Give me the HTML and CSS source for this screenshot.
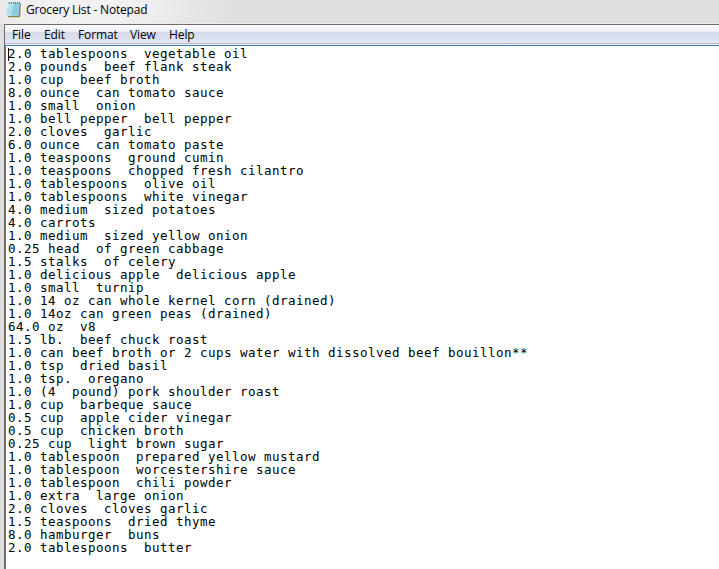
FILE: index.html
```html
<!DOCTYPE html>
<html lang="en">
<head>
<meta charset="utf-8">
<title>Grocery List - Notepad</title>
<link rel="stylesheet" href="styles.css">
</head>
<body>
<div class="window">
<header class="titlebar">
<svg class="icon" width="18" height="18" viewBox="0 0 18 18">
<path d="M4.5 2 16 2.5 15 16.3 3 16.3z" fill="#8f8058"/>
<path d="M3.5 1.5 15 1.5 13.5 15 1 15z" fill="#8fd0e2"/>
<path d="M3.5 1.5 9 1.5 6 15 1 15z" fill="#bfe6ef"/>
<path d="M4 6h9.5M3.5 8h9.5M3.3 10h9.5M3 12h9.5" stroke="#7fc3d6" stroke-width=".5"/>
<path d="M4 2h11" stroke="#4f6870" stroke-width="1.6" stroke-dasharray="1 1"/>
</svg>
<span class="title">Grocery List - Notepad</span>
</header>
<main class="frame">
<nav class="menu"><span class="file">File</span><span class="edit">Edit</span><span class="format">Format</span><span class="view">View</span><span class="help">Help</span></nav>
<div class="editor"><i class="caret"></i><pre class="text">2.0 tablespoons  vegetable oil
2.0 pounds  beef flank steak
1.0 cup  beef broth
8.0 ounce  can tomato sauce
1.0 small  onion
1.0 bell pepper  bell pepper
2.0 cloves  garlic
6.0 ounce  can tomato paste
1.0 teaspoons  ground cumin
1.0 teaspoons  chopped fresh cilantro
1.0 tablespoons  olive oil
1.0 tablespoons  white vinegar
4.0 medium  sized potatoes
4.0 carrots
1.0 medium  sized yellow onion
0.25 head  of green cabbage
1.5 stalks  of celery
1.0 delicious apple  delicious apple
1.0 small  turnip
1.0 14 oz can whole kernel corn (drained)
1.0 14oz can green peas (drained)
64.0 oz  v8
1.5 lb.  beef chuck roast
1.0 can beef broth or 2 cups water with dissolved beef bouillon**
1.0 tsp  dried basil
1.0 tsp.  oregano
1.0 (4  pound) pork shoulder roast
1.0 cup  barbeque sauce
0.5 cup  apple cider vinegar
0.5 cup  chicken broth
0.25 cup  light brown sugar
1.0 tablespoon  prepared yellow mustard
1.0 tablespoon  worcestershire sauce
1.0 tablespoon  chili powder
1.0 extra  large onion
2.0 cloves  cloves garlic
1.5 teaspoons  dried thyme
8.0 hamburger  buns
2.0 tablespoons  butter</pre></div>
</main>
</div>
</body>
</html>
```
FILE: styles.css
```css
* { box-sizing: border-box; }
body { margin: 0; background: #dfdfdf; color: #000; overflow: hidden; }
.window { width: 719px; height: 569px; display: flex; flex-direction: column; }
.titlebar { height: 24px; flex: none; display: flex; padding: 1px 0 0 5px; border-bottom: 1px solid #eee; background: radial-gradient(ellipse 150px 36px at 86px 9px, #f1f1f1 35%, #dfdfdf 100%); }
.icon { flex: none; }
.title { margin-left: 3px; font: 12px/17px "Open Sans", sans-serif; letter-spacing: -.18px; white-space: nowrap; }
.frame { flex: 1; margin-left: 4px; border: solid #6d6a6d; border-width: 1px 0 0 1px; display: flex; flex-direction: column; min-height: 0; }
.menu { height: 20px; flex: none; display: flex; padding-left: 7px; font: 12px/20px "Open Sans", sans-serif; letter-spacing: -.1px; background: linear-gradient(#fff 0, #e8edf5 7px, #d4daeb 7px, #e1e6f6 18px, #b4b8c7 18px, #b4b8c7 19px, #f0f0f0 19px); }
.file { width: 32px; }
.edit { width: 34px; }
.format { width: 52px; }
.view { width: 39px; }
.editor { position: relative; flex: 1; min-height: 0; background: #fff; border: solid #4380b5; border-width: 1px 0 0 1px; padding: 1px 0 0 2px; }
.text { margin: 0; font: 12.5px/13px "DejaVu Sans Mono", monospace; letter-spacing: .475px; }
.caret { position: absolute; left: 2px; top: 2px; width: 1px; height: 13px; background: #000; }
```
